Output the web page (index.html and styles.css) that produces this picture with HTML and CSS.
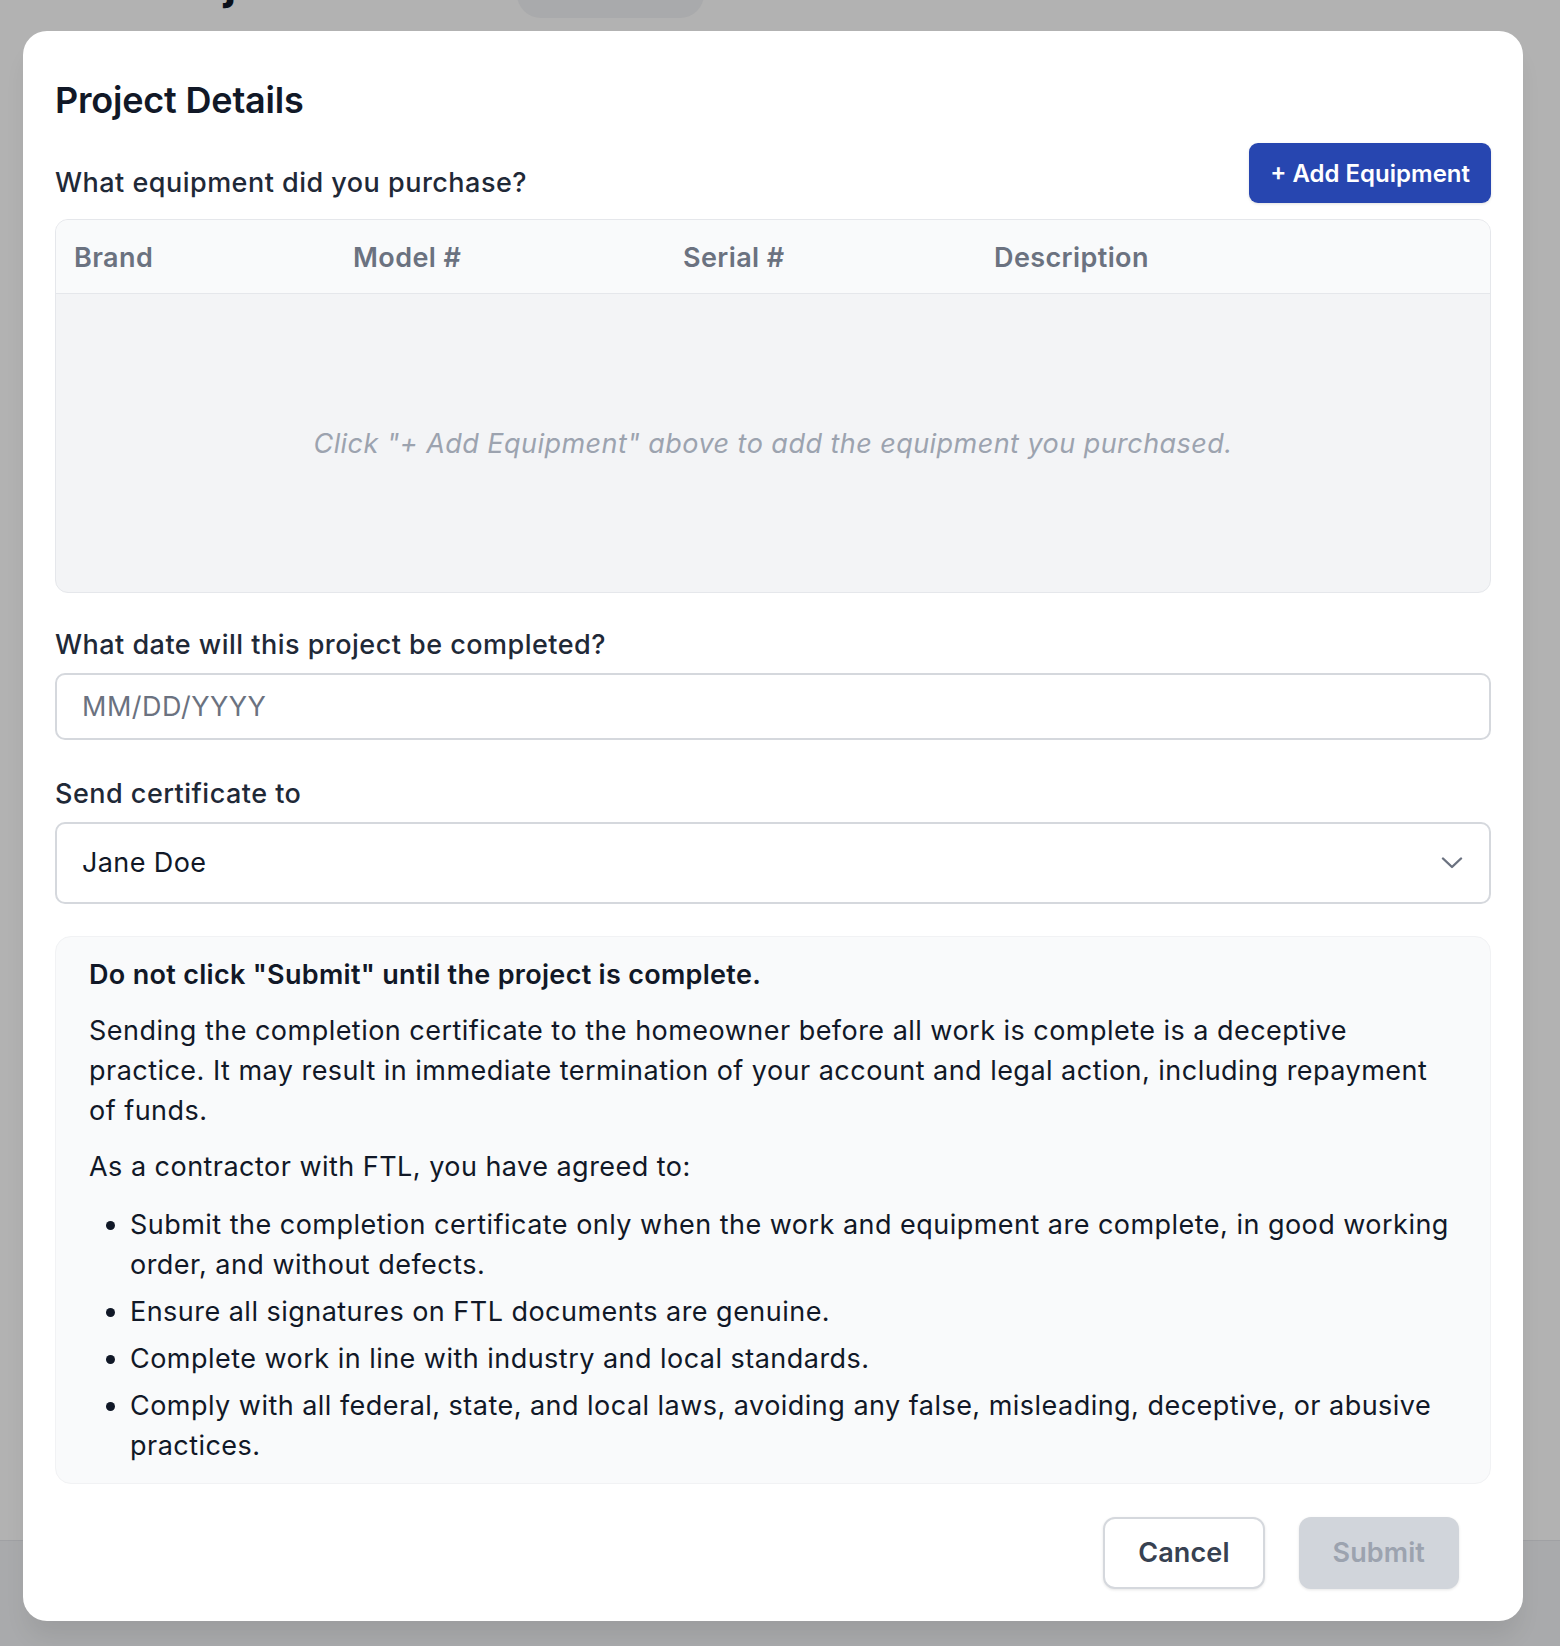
FILE: index.html
```html
<!DOCTYPE html>
<html lang="en">
<head>
<meta charset="utf-8">
<title>Project Details</title>
<link rel="stylesheet" href="styles.css">
</head>
<body>
  <div class="page">
    <h1 class="page-title">Projects</h1>
    <div class="page-pill"></div>
    <div class="page-footer"></div>
  </div>
  <div class="overlay"></div>

  <div class="modal" role="dialog" aria-labelledby="modal-title">
    <h2 class="modal-title" id="modal-title">Project Details</h2>

    <div class="equip-head">
      <span class="label">What equipment did you purchase?</span>
      <button class="btn-primary" type="button">+ Add Equipment</button>
    </div>

    <div class="table-wrap">
      <table class="equip-table">
        <colgroup>
          <col class="col-brand">
          <col class="col-model">
          <col class="col-serial">
          <col>
        </colgroup>
        <thead>
          <tr>
            <th>Brand</th>
            <th>Model #</th>
            <th>Serial #</th>
            <th>Description</th>
          </tr>
        </thead>
        <tbody>
          <tr>
            <td colspan="4" class="empty">Click "+ Add Equipment" above to add the equipment you purchased.</td>
          </tr>
        </tbody>
      </table>
    </div>

    <div class="field">
      <label class="label" for="date">What date will this project be completed?</label>
      <input class="input" id="date" type="text" placeholder="MM/DD/YYYY">
    </div>

    <div class="field field-send">
      <span class="label">Send certificate to</span>
      <div class="select">
        <span class="select-value">Jane Doe</span>
        <svg class="chevron" width="22" height="12" viewBox="0 0 22 12" aria-hidden="true">
          <path d="M2 1.5 L11 10 L20 1.5" fill="none" stroke="#6b7280" stroke-width="2.4" stroke-linecap="round" stroke-linejoin="round"/>
        </svg>
      </div>
    </div>

    <div class="notice">
      <p class="notice-title">Do not click "Submit" until the project is complete.</p>
      <p class="notice-text">Sending the completion certificate to the homeowner before all work is complete is a deceptive practice. It may result in immediate termination of your account and legal action, including repayment of funds.</p>
      <p class="notice-intro">As a contractor with FTL, you have agreed to:</p>
      <ul class="notice-list">
        <li>Submit the completion certificate only when the work and equipment are complete, in good working order, and without defects.</li>
        <li>Ensure all signatures on FTL documents are genuine.</li>
        <li>Complete work in line with industry and local standards.</li>
        <li>Comply with all federal, state, and local laws, avoiding any false, misleading, deceptive, or abusive practices.</li>
      </ul>
    </div>

    <div class="actions">
      <button class="btn-cancel" type="button">Cancel</button>
      <button class="btn-submit" type="button" disabled>Submit</button>
    </div>
  </div>
</body>
</html>
```

FILE: styles.css
```css
* {
  box-sizing: border-box;
}

html, body {
  margin: 0;
  padding: 0;
}

body {
  width: 1560px;
  height: 1646px;
  overflow: hidden;
  position: relative;
  background: #ffffff;
  font-family: "Inter", "Noto Sans", "Liberation Sans", sans-serif;
  color: #111827;
}

/* underlying page (behind the overlay) */
.page {
  position: absolute;
  inset: 0;
}

.page-title {
  position: absolute;
  left: 150px;
  top: -40px;
  margin: 0;
  font-size: 45px;
  line-height: 45px;
  font-weight: 700;
  color: #111827;
}

.page-pill {
  position: absolute;
  left: 517px;
  top: -30px;
  width: 187px;
  height: 48px;
  border-radius: 24px;
  background: #f3f4f6;
}

.page-footer {
  position: absolute;
  left: 0;
  right: 0;
  top: 1540px;
  bottom: 0;
  background: #f3f4f6;
  border-top: 1px solid #e5e7eb;
}

.overlay {
  position: absolute;
  inset: 0;
  background: rgba(0, 0, 0, 0.3);
}

/* modal */
.modal {
  position: absolute;
  left: 23px;
  top: 31px;
  width: 1500px;
  background: #ffffff;
  border-radius: 24px;
  padding: 45px 32px 32px;
  box-shadow: 0 20px 25px -5px rgba(0, 0, 0, 0.08);
}

.modal-title {
  margin: 0;
  font-size: 36px;
  line-height: 48px;
  font-weight: 600;
  color: #111827;
  letter-spacing: -0.2px;
}

.label {
  display: block;
  font-size: 27px;
  line-height: 40px;
  font-weight: 500;
  letter-spacing: 0.48px;
  color: #1f2937;
}

.equip-head {
  margin-top: 19px;
  display: flex;
  justify-content: space-between;
  align-items: flex-end;
}

.btn-primary {
  height: 60px;
  padding: 0 21px;
  border: none;
  border-radius: 9px;
  background: #2746b0;
  color: #ffffff;
  font-family: inherit;
  font-size: 24px;
  font-weight: 600;
  box-shadow: 0 1px 3px rgba(0, 0, 0, 0.12);
}

/* equipment table */
.table-wrap {
  margin-top: 16px;
  border: 1px solid #e5e7eb;
  border-radius: 13px;
  overflow: hidden;
  background: #f3f4f6;
}

.equip-table {
  width: 100%;
  border-collapse: collapse;
  table-layout: fixed;
}

.col-brand { width: 279px; }
.col-model { width: 330px; }
.col-serial { width: 311px; }

.equip-table th {
  background: #f9fafb;
  border-bottom: 1px solid #e5e7eb;
  padding: 18px 18px 15px;
  text-align: left;
  font-size: 27px;
  line-height: 40px;
  font-weight: 600;
  letter-spacing: 0.4px;
  color: #6b7280;
}

.equip-table .empty {
  height: 298px;
  padding: 3px 0 0;
  text-align: center;
  vertical-align: middle;
  font-size: 27px;
  line-height: 40px;
  font-style: italic;
  letter-spacing: 0.45px;
  color: #9ca3af;
}

/* fields */
.field {
  margin-top: 32px;
  display: flex;
  flex-direction: column;
  gap: 8px;
}

.field-send {
  margin-top: 34px;
}

.input {
  display: block;
  width: 100%;
  height: 67px;
  padding: 0 25px;
  border: 2px solid #d5d8dd;
  border-radius: 10px;
  background: #ffffff;
  font-family: inherit;
  font-size: 27px;
  letter-spacing: 0.5px;
  color: #111827;
  outline: none;
}

.input::placeholder {
  color: #6b7280;
}

.select {
  height: 82px;
  padding: 0 26px 0 25px;
  border: 2px solid #d5d8dd;
  border-radius: 10px;
  background: #ffffff;
  display: flex;
  align-items: center;
  justify-content: space-between;
}

.select-value {
  font-size: 27px;
  letter-spacing: 0.4px;
  color: #111827;
}

.chevron {
  display: block;
}

/* notice */
.notice {
  margin-top: 32px;
  background: #f9fafb;
  border: 1px solid #f1f2f4;
  border-radius: 16px;
  padding: 18px 33px 17px;
  font-size: 27px;
  line-height: 40px;
  letter-spacing: 0.47px;
  color: #111827;
}

.notice p {
  margin: 0;
}

.notice .notice-title {
  font-weight: 600;
  letter-spacing: 0.3px;
}

.notice .notice-text {
  margin-top: 16px;
}

.notice .notice-intro {
  margin-top: 16px;
}

.notice-list {
  margin: 18px 0 0;
  padding-left: 41px;
}

.notice-list li + li {
  margin-top: 7px;
}

/* actions */
.actions {
  margin-top: 33px;
  padding-right: 32px;
  display: flex;
  justify-content: flex-end;
  gap: 34px;
}

.btn-cancel,
.btn-submit {
  height: 72px;
  padding: 0 33px;
  border-radius: 12px;
  font-family: inherit;
  font-size: 27px;
  font-weight: 600;
  letter-spacing: 0.1px;
  box-shadow: 0 1px 3px rgba(0, 0, 0, 0.1);
}

.btn-cancel {
  background: #ffffff;
  border: 2px solid #d5d8dd;
  color: #374151;
}

.btn-submit {
  background: #d1d5db;
  border: none;
  color: #9ca3af;
  padding: 0 34px;
}
```
